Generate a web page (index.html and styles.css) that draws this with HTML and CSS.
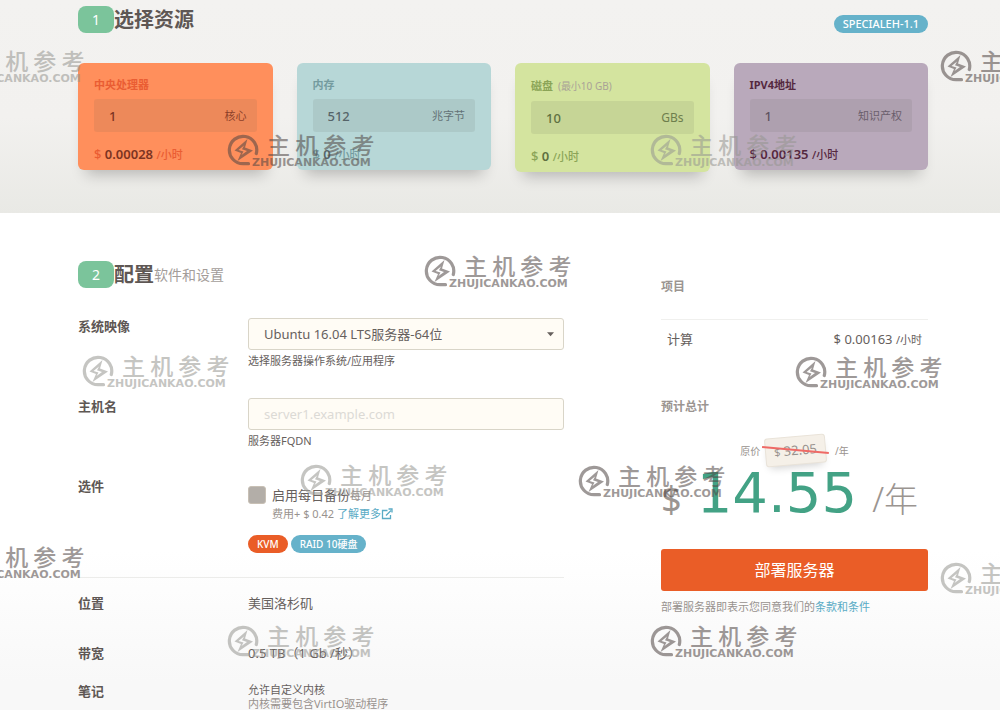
FILE: index.html
```html
<!DOCTYPE html>
<html lang="zh-CN">
<head>
<meta charset="utf-8">
<meta name="viewport" content="width=device-width, initial-scale=1">
<title>部署服务器</title>
<link rel="stylesheet" href="styles.css">
</head>
<body>
<svg class="defs" aria-hidden="true">
  <symbol id="bolt" viewBox="0 0 32 32">
    <path d="M21.500 29.700H16A13.700 13.700 0 1 1 29.300 19.500" fill="none" stroke="currentColor" stroke-width="3.200" stroke-linecap="round"/>
    <path d="M20.500 5L7.500 16.500L14 19L10.500 27L26 16.500L18 13.500ZM17 11.500L15 15.200L20 17L14.500 21L16.500 17.500L11.500 16Z" fill="currentColor" fill-rule="evenodd"/>
  </symbol>
</svg>

<div class="page">
  <section class="resources">
    <header class="head">
      <h2 class="title"><span class="step">1</span>选择资源</h2>
      <span class="pill pill-plan">SPECIALEH-1.1</span>
    </header>
    <div class="cards">
      <div class="card cpu">
        <label class="card-label" for="cpu">中央处理器</label>
        <div class="field"><input id="cpu" type="text" value="1"><span class="unit">核心</span></div>
        <p class="rate">$ <b>0.00028</b> <small>/小时</small></p>
      </div>
      <div class="card ram">
        <label class="card-label" for="ram">内存</label>
        <div class="field"><input id="ram" type="text" value="512"><span class="unit">兆字节</span></div>
        <p class="rate">$ <b>0</b> <small>/小时</small></p>
      </div>
      <div class="card disk">
        <label class="card-label" for="disk">磁盘 <span class="hint">(最小10 GB)</span></label>
        <div class="field"><input id="disk" type="text" value="10"><span class="unit">GBs</span></div>
        <p class="rate">$ <b>0</b> <small>/小时</small></p>
      </div>
      <div class="card ip">
        <label class="card-label" for="ip">IPV4地址</label>
        <div class="field"><input id="ip" type="text" value="1"><span class="unit">知识产权</span></div>
        <p class="rate">$ <b>0.00135</b> <small>/小时</small></p>
      </div>
    </div>
  </section>

  <section class="config">
    <form class="settings">
      <h2 class="title"><span class="step">2</span>配置<span class="sub">软件和设置</span></h2>
      <div class="rows">
        <div class="row">
          <label class="name" for="image">系统映像</label>
          <div>
            <div class="select-wrap">
              <select id="image" class="control"><option>Ubuntu 16.04 LTS服务器-64位</option></select>
              <svg class="caret" viewBox="0 0 6 4" aria-hidden="true"><path d="M0 0H6L3 3.500Z" fill="currentColor"/></svg>
            </div>
            <p class="help">选择服务器操作系统/应用程序</p>
          </div>
        </div>
        <div class="row">
          <label class="name" for="host">主机名</label>
          <div>
            <input id="host" class="control" type="text" placeholder="server1.example.com">
            <p class="help">服务器FQDN</p>
          </div>
        </div>
        <div class="row row-options">
          <span class="name">选件</span>
          <div class="options">
            <div class="backup">
              <input id="backup" class="check" type="checkbox">
              <div>
                <label class="backup-name" for="backup">启用每日备份<small>每月</small></label>
                <p class="fee">费用+ $ 0.42 <a class="link" href="#">了解更多<svg class="ext" viewBox="0 0 12 12" aria-hidden="true"><path d="M6.500 2.500H1.500V10.500H9.500V7M5 7.500L10 2.500M7.500 1H11V4.500" fill="none" stroke="currentColor" stroke-width="1.300"/></svg></a></p>
              </div>
            </div>
            <div class="pills"><span class="pill pill-kvm">KVM</span><span class="pill">RAID 10硬盘</span></div>
          </div>
        </div>
      </div>
      <dl class="facts">
        <div class="fact"><dt class="name">位置</dt><dd>美国洛杉矶</dd></div>
        <div class="fact"><dt class="name">带宽</dt><dd>0.5 TB（1 Gb /秒）</dd></div>
        <div class="fact"><dt class="name">笔记</dt><dd class="note">允许自定义内核<span>内核需要包含VirtIO驱动程序</span></dd></div>
      </dl>
    </form>

    <aside class="summary">
      <h3 class="sum-head">项目</h3>
      <div class="item"><span>计算</span><span>$ 0.00163 <small>/小时</small></span></div>
      <h3 class="sum-head">预计总计</h3>
      <p class="was"><span>原价</span><span class="was-tag"><small>$</small> 32.05</span><span>/年</span></p>
      <p class="total"><span class="cur">$</span><strong>14.55</strong><span class="per">/年</span></p>
      <button class="deploy" type="button">部署服务器</button>
      <p class="terms">部署服务器即表示您同意我们的<a class="link" href="#">条款和条件</a></p>
    </aside>
  </section>

  <div class="marks" aria-hidden="true">
    <div class="mark light m1"><svg><use href="#bolt"/></svg><div><p class="cn">主 机 参 考</p><p class="en">ZHUJICANKAO.COM</p></div></div>
    <div class="mark m2"><svg><use href="#bolt"/></svg><div><p class="cn">主 机 参 考</p><p class="en">ZHUJICANKAO.COM</p></div></div>
    <div class="mark light m3"><svg><use href="#bolt"/></svg><div><p class="cn">主 机 参 考</p><p class="en">ZHUJICANKAO.COM</p></div></div>
    <div class="mark m4"><svg><use href="#bolt"/></svg><div><p class="cn">主 机 参 考</p><p class="en">ZHUJICANKAO.COM</p></div></div>
    <div class="mark m5"><svg><use href="#bolt"/></svg><div><p class="cn">主 机 参 考</p><p class="en">ZHUJICANKAO.COM</p></div></div>
    <div class="mark light m6"><svg><use href="#bolt"/></svg><div><p class="cn">主 机 参 考</p><p class="en">ZHUJICANKAO.COM</p></div></div>
    <div class="mark m7"><svg><use href="#bolt"/></svg><div><p class="cn">主 机 参 考</p><p class="en">ZHUJICANKAO.COM</p></div></div>
    <div class="mark light m8"><svg><use href="#bolt"/></svg><div><p class="cn">主 机 参 考</p><p class="en">ZHUJICANKAO.COM</p></div></div>
    <div class="mark m9"><svg><use href="#bolt"/></svg><div><p class="cn">主 机 参 考</p><p class="en">ZHUJICANKAO.COM</p></div></div>
    <div class="mark m10"><svg><use href="#bolt"/></svg><div><p class="cn">主 机 参 考</p><p class="en">ZHUJICANKAO.COM</p></div></div>
    <div class="mark light m11"><svg><use href="#bolt"/></svg><div><p class="cn">主 机 参 考</p><p class="en">ZHUJICANKAO.COM</p></div></div>
    <div class="mark light m12"><svg><use href="#bolt"/></svg><div><p class="cn">主 机 参 考</p><p class="en">ZHUJICANKAO.COM</p></div></div>
    <div class="mark m13"><svg><use href="#bolt"/></svg><div><p class="cn">主 机 参 考</p><p class="en">ZHUJICANKAO.COM</p></div></div>
  </div>
</div>
</body>
</html>
```
FILE: styles.css
```css
* { box-sizing: border-box; }
body, h2, h3, p, dl, dd { margin: 0; }
body {
  font: 13px/18px "Noto Sans", "Noto Sans CJK SC", sans-serif;
  color: #66605d;
  background: #fff;
}
input, select, button { font: inherit; color: inherit; }
.defs { position: absolute; width: 0; height: 0; }
.page { position: relative; }

/* Section headings */
.resources {
  padding: 6px 72px 41px 78px;
  background: linear-gradient(#f3f2f0 0%, #f2f1ef 55%, #e9e9e5 100%);
}
.head { display: flex; justify-content: space-between; align-items: flex-end; height: 27px; }
.title {
  display: flex;
  align-items: center;
  height: 27px;
  font-size: 20px;
  line-height: 27px;
  color: #5e5754;
}
.step {
  width: 36px;
  border-radius: 8px;
  background: #7bc49b;
  color: #fff;
  font-size: 14px;
  font-weight: 400;
  text-align: center;
}
.sub { font-size: 14px; font-weight: 400; color: #a39d9a; }

.pill {
  padding: 0 9px;
  border-radius: 9px;
  background: #66b2ca;
  color: #fff;
  font-size: 10px;
  font-weight: 500;
  line-height: 18px;
}
.pill-kvm { background: #ea5d27; }
.pill-plan { font-size: 11px; }

/* Resource cards */
.cards {
  display: grid;
  grid-template-columns: repeat(4, minmax(0, 1fr));
  align-items: start;
  gap: 24px;
  margin-top: 30px;
}
.card {
  padding: 13px 16px 6px;
  border-radius: 6px;
  box-shadow: 0 12px 14px -8px rgba(0, 0, 0, .24);
}
.card-label { display: block; margin-bottom: 5px; font-size: 11px; font-weight: 700; }
.hint { margin-left: 2px; font-weight: 400; font-size: 10px; color: #a9a297; }
.field {
  display: flex;
  align-items: center;
  height: 33px;
  margin-bottom: 13px;
  padding: 0 10px 0 15px;
  border-radius: 3px;
  background: rgba(90, 90, 80, .11);
}
.field input {
  flex: 1;
  min-width: 0;
  padding: 0;
  border: 0;
  background: none;
  font-weight: 500;
}
.unit { font-size: 11px; opacity: .85; }
.rate { font-weight: 500; }
.rate b { font-weight: 600; }
.rate small { font-size: 11px; }
.cpu { background: #ff8f5c; }
.cpu .card-label, .cpu .rate { color: #ea5d33; }
.cpu .field, .cpu b { color: #7c3422; }
.ram { background: #b7d7d7; }
.ram .card-label, .ram .rate { color: #749b9f; }
.ram .field, .ram b { color: #566469; }
.disk { background: #d4e49f; }
.disk .card-label { line-height: 20px; }
.disk .card-label, .disk .rate { color: #8ba457; }
.disk .field, .disk b { color: #5f7041; }
.disk .unit { font-size: 12px; }
.ip { background: #b9a9bb; }
.ip .card-label, .ip .rate { color: #55283f; }
.ip .field { color: #5f5361; }

/* Configuration */
.config {
  display: grid;
  grid-template-columns: minmax(0, 1fr) 267px;
  gap: 97px;
  padding: 48px 72px 0 78px;
  background: linear-gradient(#fff 0%, #fff 68%, #f8f8f8 94%);
}
.rows { margin-top: 30px; border-bottom: 1px solid #ececea; }
.row, .fact { display: grid; grid-template-columns: 170px minmax(0, 1fr); align-items: start; }
.row { min-height: 80px; }
.row-options { min-height: 99px; }
.name { font-weight: 700; line-height: 16px; color: #5e5754; }
.control {
  display: block;
  width: 100%;
  height: 32px;
  padding: 0 15px;
  border: 1px solid #d9d5c8;
  border-radius: 3px;
  background: #fffcf5;
  appearance: none;
}
.control::placeholder { color: #dcdad5; }
.select-wrap { position: relative; }
.caret { position: absolute; right: 10px; top: 14px; width: 7px; height: 5px; }
.help { margin-top: 2px; font-size: 11px; }
.options { padding-top: 8px; }
.backup { display: flex; gap: 6px; }
.check {
  width: 18px;
  height: 18px;
  margin: 0;
  border: 1px solid #c8c0b5;
  border-radius: 3px;
  background: #b3aea8;
  appearance: none;
}
.backup-name { display: block; }
.backup-name small { font-size: 11px; color: #98928e; }
.fee { font-size: 11px; color: #98928e; }
.link { color: #5aabc5; text-decoration: none; }
.ext { width: 12px; height: 12px; vertical-align: -2px; }
.pills { display: flex; gap: 3px; margin-top: 12px; }
.facts { margin-top: 17px; }
.fact { min-height: 50px; }
.fact dd { line-height: 16px; }
.fact:nth-child(2) { min-height: 38px; }
.fact:last-child { min-height: 28px; }
.fact .note { font-size: 11px; line-height: 14px; }
.note span { display: block; color: #98928e; }

/* Order summary */
.summary { padding-top: 17px; }
.sum-head { font-size: 12px; line-height: 18px; color: #9b9591; }
.item {
  display: flex;
  justify-content: space-between;
  margin: 23px 0 49px;
  padding: 10px 6px 0;
  border-top: 1px solid #f0f0ee;
}
.item small { font-size: 11px; }
.was {
  display: flex;
  justify-content: center;
  align-items: center;
  gap: 5px;
  margin-top: 20px;
  font-size: 10px;
  color: #98928e;
}
.was-tag {
  position: relative;
  margin-right: 4px;
  padding: 0 8px;
  border: 1px solid #e9e3d9;
  border-radius: 3px;
  background: #f5f0e8;
  box-shadow: 0 5px 8px -4px rgba(0, 0, 0, .2);
  font-size: 13px;
  line-height: 26px;
  transform: rotate(-5deg);
}
.was-tag small { font-size: 11px; }
.was-tag::after {
  content: "";
  position: absolute;
  left: -4px;
  right: -4px;
  top: 12px;
  height: 2px;
  background: #ef6a66;
  transform: rotate(10deg);
}
.total {
  display: flex;
  align-items: baseline;
  justify-content: space-between;
  padding-right: 10px;
  line-height: 56px;
  color: #9b9591;
}
.total strong { font: 56px/56px "DejaVu Sans", sans-serif; color: #43a285; }
.cur { font-size: 36px; }
.per { font-size: 34px; font-weight: 300; }
.deploy {
  display: block;
  width: 100%;
  height: 42px;
  margin-top: 22px;
  border: 0;
  border-radius: 3px;
  background: #ea5d27;
  color: #fff;
  font-size: 16px;
}
.terms { margin-top: 7px; font-size: 11px; color: #98928e; }

/* Watermarks scattered over the page */
.marks { position: absolute; inset: 0; overflow: hidden; pointer-events: none; }
.mark {
  position: absolute;
  display: flex;
  color: rgb(80, 70, 68);
  opacity: .55;
  white-space: nowrap;
}
.mark.light { color: rgb(150, 150, 145); }
.mark svg { width: 32px; height: 32px; }
.cn { padding-left: 8px; font: 500 23px/20px "Noto Sans CJK SC", sans-serif; }
.en { margin-left: -7px; font: 700 11px/18px "DejaVu Sans", sans-serif; }
.m1 { left: -63px; top: 50px; }
.m2 { left: 227px; top: 134px; }
.m3 { left: 650px; top: 134px; }
.m4 { left: 940px; top: 50px; }
.m5 { left: 424px; top: 255px; }
.m6 { left: 82px; top: 355px; }
.m7 { left: 795px; top: 356px; }
.m8 { left: 300px; top: 464px; }
.m9 { left: 578px; top: 465px; }
.m10 { left: -63px; top: 546px; }
.m11 { left: 940px; top: 562px; }
.m12 { left: 227px; top: 625px; }
.m13 { left: 650px; top: 625px; }
```
